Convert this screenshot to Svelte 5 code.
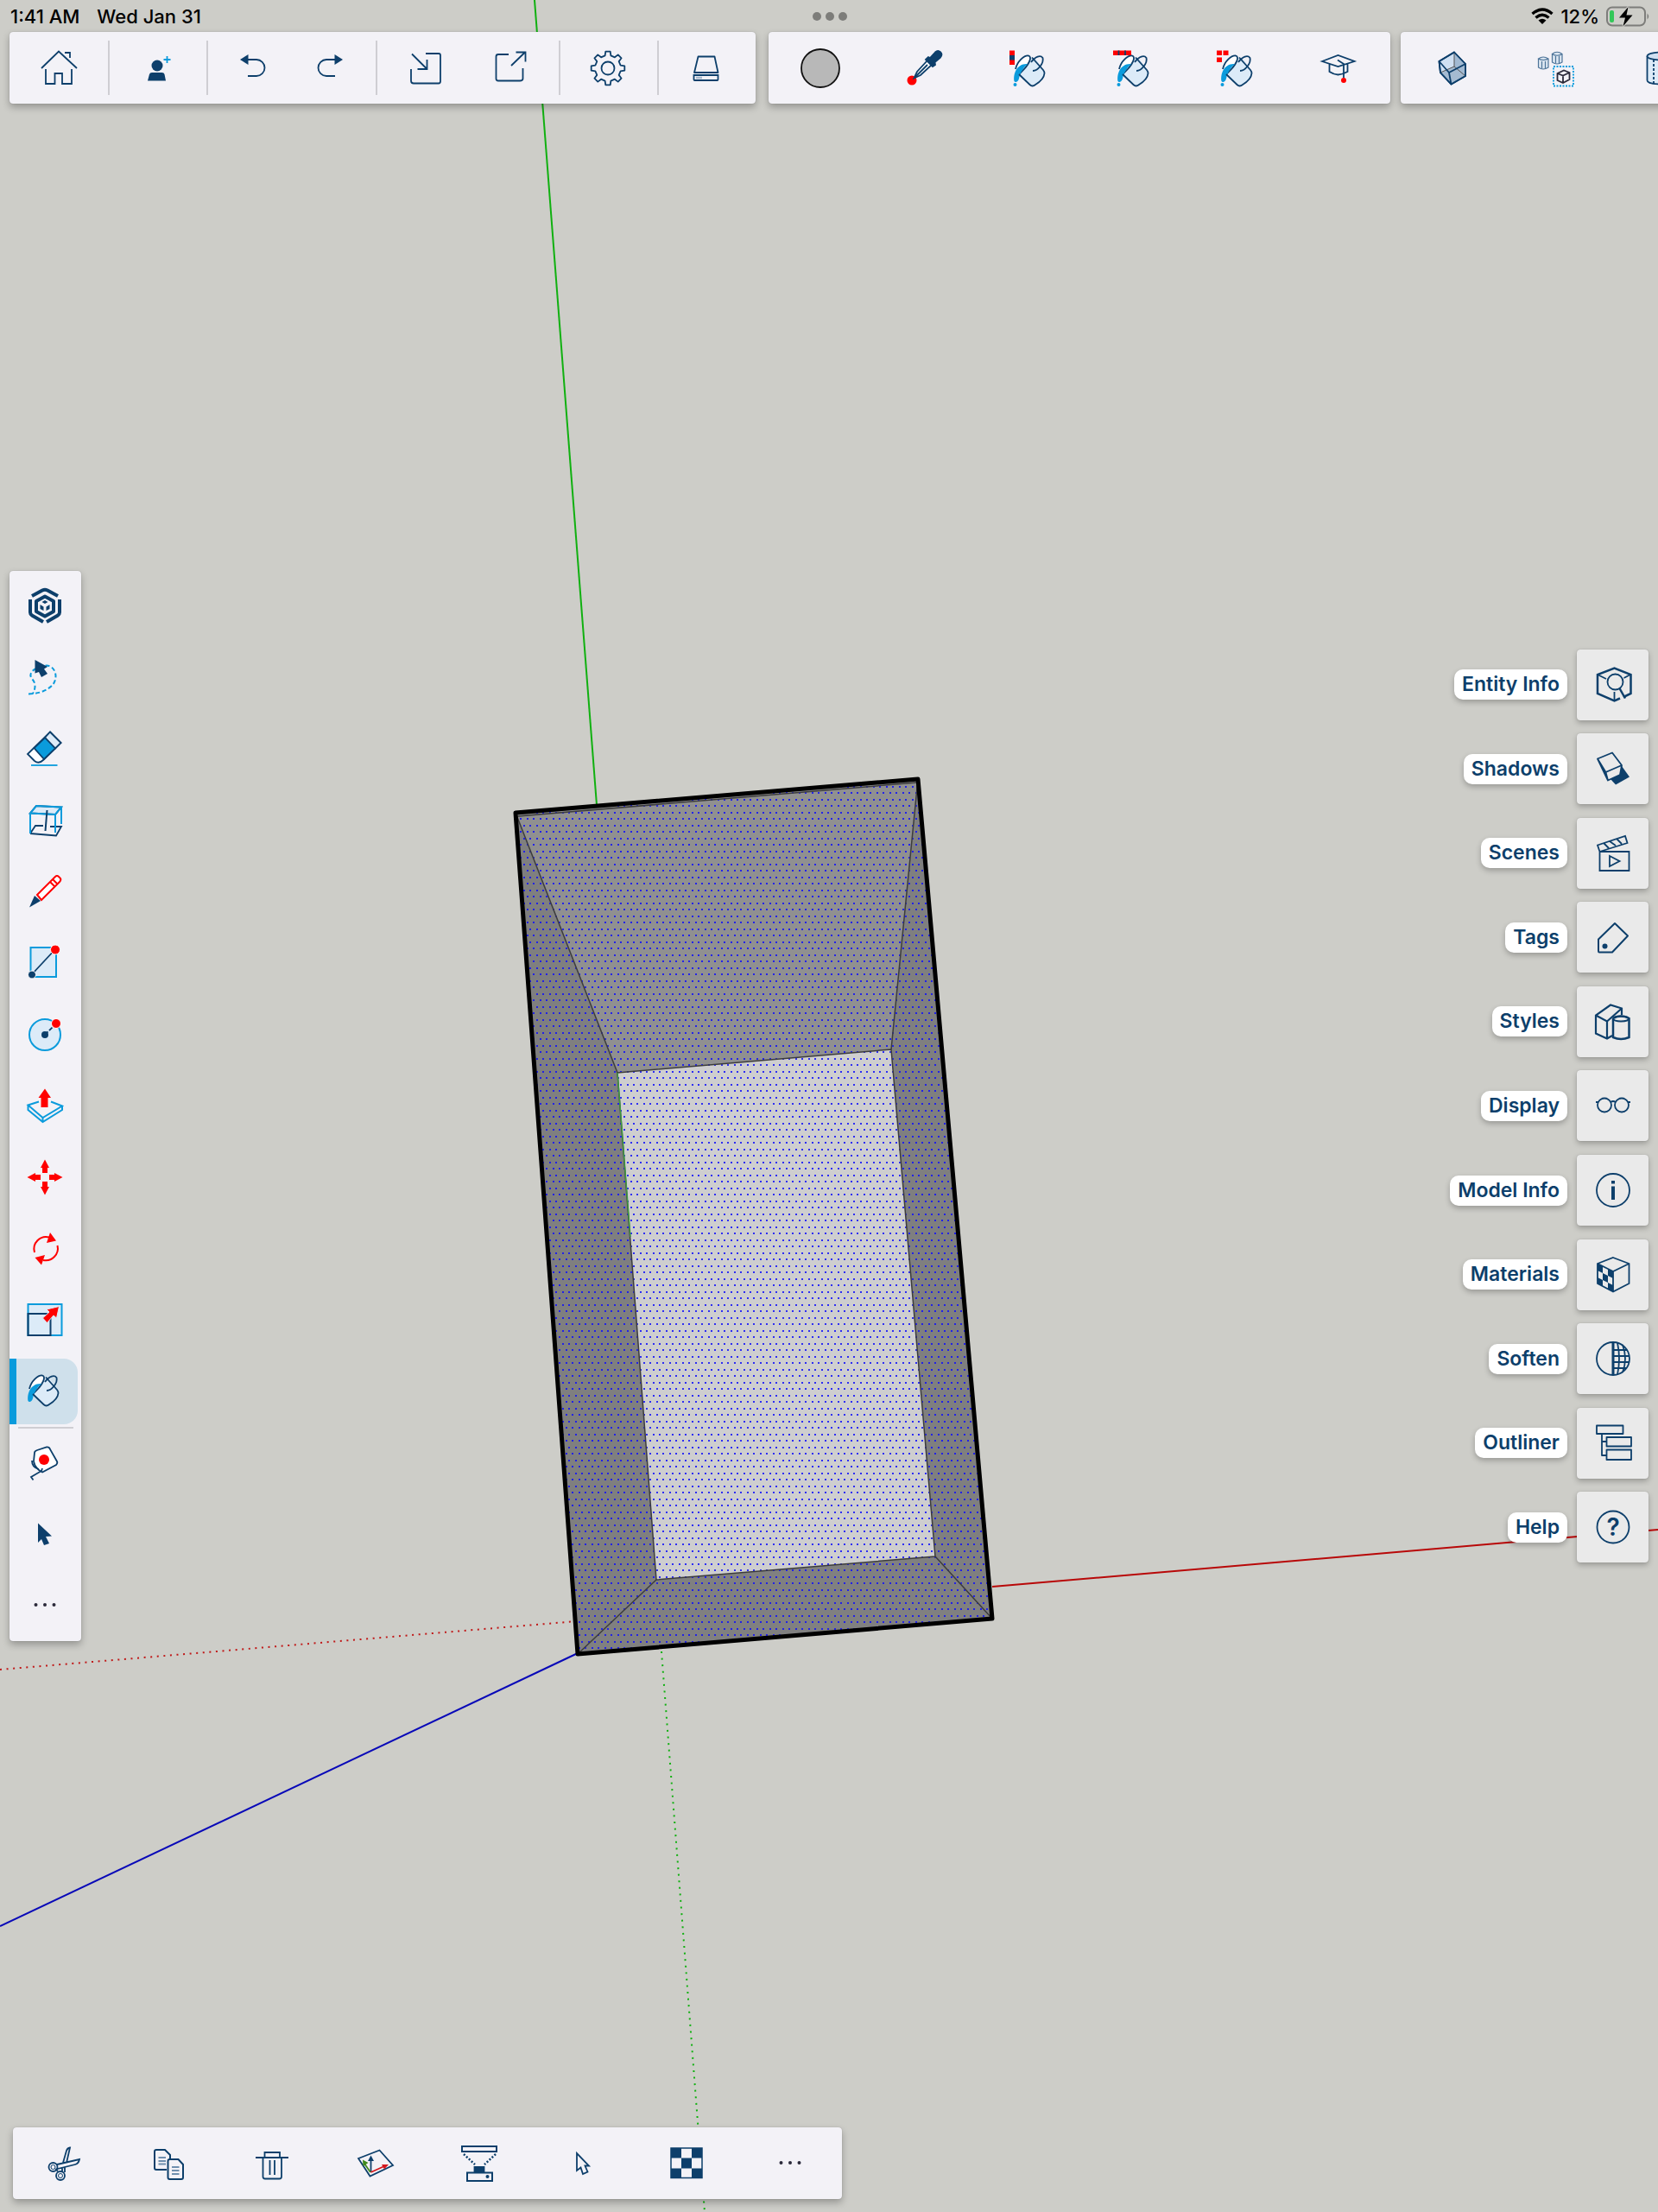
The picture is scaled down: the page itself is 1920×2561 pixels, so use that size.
<script>
	const navy = '#0d3f6b';
	const cyan = '#0a9bdc';
	const pale = '#dcebf8';

	const gearPath = () => {
		const points = [];
		for (let i = 0; i < 8; i++) {
			const steps = [
				[-13, 15],
				[-8, 19.5],
				[8, 19.5],
				[13, 15]
			];
			for (const [offset, radius] of steps) {
				const angle = ((i * 45 + offset) * Math.PI) / 180;
				points.push(
					`${(24 + radius * Math.sin(angle)).toFixed(1)} ${(24 - radius * Math.cos(angle)).toFixed(1)}`
				);
			}
		}
		return `M${points.join('L')}Z`;
	};

	const bucket = `
		<path d="M14 31L27 43Q29.500 46 33 43Q44 36 43.500 28L33 12L24 13Z" fill="${pale}" stroke="none"/>
		<path d="M10 25C12 16 20 9 25 9.500C29 10.500 27 17 20 25L14 31" fill="#fff"/>
		<path d="M8.500 39C7 30 12 18 24 19C20 23 16 27 14 36C13 40 9.500 41 8.500 39Z" fill="${cyan}" stroke="none"/>
		<path d="M14 31L26.500 43Q29.500 46 33 43C38 40 43 35 43.500 30Q43.600 28 42 26L29 11.500"/>
		<path d="M28 17C33 10 39 8.500 41.500 12C43 18 36 27 30 27"/>`;
	const drop = `<circle cx="9.500" cy="43" r="2" fill="${cyan}" stroke="none"/>`;
	const dots = `<g fill="#2b2a3a" stroke="none"><circle cx="13.500" cy="23" r="2"/><circle cx="24" cy="23" r="2"/><circle cx="34.500" cy="23" r="2"/></g>`;

	const icons = {
		home: `<path d="M4 24L24 4.500L45 24M9 25V42H19.500V30H28V42H39V25M31 6H37V12"/>`,
		person: `<g fill="${navy}" stroke="none"><circle cx="24" cy="21" r="6.500"/><path d="M13 38.500L15 31Q15.500 29 18 29H29.500Q32 29 32.500 31L34 38.500Z"/></g><path d="M35.500 10V18M31.500 14H39.500" stroke="${cyan}"/>`,
		undo: `<path d="M18 14H29A9.500 9.500 0 0 1 29 33H19"/><path d="M10 14L19.500 8V20Z" fill="${navy}" stroke="none"/>`,
		redo: `<path d="M30 14H19A9.500 9.500 0 0 0 19 33H29"/><path d="M38 14L28.500 8V20Z" fill="${navy}" stroke="none"/>`,
		import: `<path d="M25 7H40Q42 7 42 9V39Q42 41.500 40 41.500H11Q8 41.500 8 38.500V25M9 7.500L26.500 25M15.500 25H26.500V14"/>`,
		export: `<path d="M22 8H10Q7.500 8 7.500 10.500V36Q7.500 38.500 10 38.500H35Q38.500 38.500 38.500 36V24M25 21L41 5.500M30.500 5.500H41.500V16.500"/>`,
		gear: `<path d="${gearPath()}" stroke-linejoin="round"/><circle cx="24" cy="24" r="7.500"/>`,
		drive: `<path d="M14.500 10.500H33.500L37.500 29H10Z" stroke-linejoin="round"/><path d="M9.500 32H37.500V37Q37.500 38 36.500 38H10.500Q9.500 38 9.500 37Z"/><path d="M12 35H19" stroke="#a9b9cc" stroke-width="2.500"/>`,
		swatch: `<circle cx="24" cy="24" r="22" fill="#b8b8b8" stroke="#111"/>`,
		dropper: `<circle cx="10" cy="38" r="5.500" fill="red" stroke="none"/><path d="M12.500 35.500L16 28L28 15L33 20L20 32Z" fill="#fff"/><path d="M14 34L28 20"/><path d="M26 14L29 11L31 12L37 5.500C41 1.500 47 6.500 43 11.500L36.500 17L37 20L34 22Z" fill="${navy}"/>`,
		paintOne: `${bucket}${drop}<g stroke="none"><path d="M3 3.500H9V20H3Z" fill="red"/><path d="M3 9H9V14.500H3Z" fill="${navy}"/></g>`,
		paintRow: `${bucket}${drop}<path d="M3 3.500H24V9H3Z" fill="red" stroke="none"/><path d="M9.500 3.500V9M17 3.500V9"/>`,
		paintAll: `${bucket}${drop}<path d="M3 3.500H9V9H3ZM10.500 3.500H16.500V9H10.500ZM3 11.500H9V17H3Z" fill="red" stroke="none"/>`,
		learn: `<path d="M5 16L23.500 9L42.500 16L23.500 22ZM13.500 19V28Q18 31 23.500 31.500Q29 31 34.500 28V19M23 14.500L30 19V35"/><circle cx="30" cy="38" r="3" fill="red" stroke="none"/>`,
		box: `<path d="M26 5.500L39 19V33L22.500 42.500L10 29L8.500 16Z" fill="#cfe0f2"/><path d="M26 5.500L39 19V33L26 22Z" fill="#8fa9c4" stroke="none" opacity=".7"/><path d="M10 29L26 22L39 33L22.500 42.500Z" fill="#7b95b0" stroke="none" opacity=".5"/><path d="M26 5.500V22L10 29M26 22L39 33" stroke="#555" stroke-width="1"/><path d="M26 5.500L39 19V33L22.500 42.500L10 29L8.500 16ZM8.500 16L20 29L39 19M20 29L22.500 42.500" stroke-linejoin="round"/>`,
		components: `<g stroke="#4c7398" stroke-width="1.200" fill="#dbe6f1"><path d="M3.500 13V23Q9 27 15 23V13Q9 9 3.500 13Q9 16 15 13M7.500 16V24M11.500 16V24"/><path d="M19.500 7.500V17Q25 21 31 17V7.500Q25 3 19.500 7.500Q25 11 31 7.500M23.500 10V18M27.500 10V18"/></g><path d="M21 22H44V44.500H21Z" stroke="${cyan}" stroke-dasharray="2 1.500"/><path d="M25.500 30L33 26.500L39.500 29V37L32 41L25.500 38ZM25.500 30L32 32.500L39.500 29M32 32.500V41" stroke="#2b2a3a"/>`,
		cylinder: `<path d="M9.500 10V38C9.500 44 40 44 40 38V10" fill="${pale}"/><ellipse cx="24.500" cy="10" rx="15" ry="4.500" fill="#cfe0f2"/><path d="M17 14V42" stroke-dasharray="3 2"/>`,
		logo: `<g stroke-width="4" stroke-linejoin="round"><path d="M9 12L21 5.500Q24 4 27 5.500L39 12"/><path d="M7 16V31Q7 33 9 34.500L22 42M41 16V31Q41 33 39 34.500L26 42"/><path d="M24 12.500L34 18V30L24 35.500L14 30V18Z"/></g><g fill="${navy}" stroke="none"><path d="M24 17L27.500 19L24 21L20.500 19ZM18.500 22L22.500 24.500V29L18.500 27ZM29.500 22L25.500 24.500V29L29.500 27Z"/></g>`,
		lasso: `<path d="M5 43.500C20 43 28 38 33 33C40 24 36 11 26 10.500L22 11M14 14C7 17 6 22 9 26C13 30 14 36 10 43" stroke="${cyan}" stroke-width="2" stroke-dasharray="5 3"/><path d="M12.500 4L27 12L23 14.500L27 20L20 24L17 18L12.500 19.500Z" fill="${navy}" stroke="none"/>`,
		eraser: `<path d="M30 4.500L42.500 17L22 37Q17 42 12 38L4 30Z" fill="#fff"/><path d="M30 4.500L42.500 17L36 23.500L24 11Z" fill="${pale}"/><path d="M24 11L36 23.500L23 36L11.500 23Z" fill="${cyan}"/><path d="M8 43H38.500" stroke="${cyan}"/>`,
		section: `<path d="M7 39L13 30H22M30 31L43 31L37 41.500L7 39"/><path d="M14 7L43 8.500L36 17L7 15.500Z" fill="${pale}"/><g stroke="${cyan}" stroke-width="2"><path d="M14 7L43 8.500L36 17L7 15.500ZM7 15V39M36 17V38M43 8V28"/></g><path d="M26.500 12L24.500 36" stroke-width="2"/>`,
		pencil: `<path d="M6 42.500L12 29L19 35Z" fill="${navy}" stroke="none"/><path d="M15 28L36 7Q38 5 40 7L42 9Q43 11 41 13L20 34ZM33 10L38.500 15.500M30 13L35 18" stroke="red" stroke-width="2" fill="#fff"/>`,
		rectangle: `<path d="M7.500 6H37V40H7.500Z" stroke="${cyan}" stroke-width="2" fill="${pale}"/><path d="M9 37L36 8"/><circle cx="36" cy="8.500" r="5.500" fill="red" stroke="#fff" stroke-width="1"/><circle cx="9" cy="37.500" r="4.500" fill="${navy}" stroke="#fff" stroke-width="1"/>`,
		circle: `<circle cx="24" cy="24" r="18" stroke="${cyan}" stroke-width="2" fill="${pale}"/><path d="M24 24L36 12" stroke-dasharray="5 2"/><circle cx="37" cy="11" r="5.500" fill="red" stroke="#fff" stroke-width="1"/><circle cx="24" cy="24" r="4" fill="${navy}" stroke="none"/>`,
		pushPull: `<path d="M17 19.500L4.500 23.500L21.500 38L44 24.500L31 19.500M4.500 23.500V29L21.500 43L44 29V24.500M21.500 38V43" stroke="${cyan}" stroke-width="2"/><path d="M24 4.500L31 15H27.500V26H19.500V15H16.500Z" fill="red" stroke="none"/>`,
		move: `<g fill="red" stroke="none"><path d="M24 3.500L29 13H27V19H21V13H19Z"/><path d="M24 44.500L29 35H27V29H21V35H19Z"/><path d="M3.500 24L13 19V21H19V27H13V29Z"/><path d="M44.500 24L35 19V21H29V27H35V29Z"/></g>`,
		rotate: `<path d="M12 28A14 14 0 0 1 29 10.500M38.500 20A14 14 0 0 1 22 37" stroke="red" stroke-width="2"/><path d="M30 5L37 14.500L26 17ZM20 42.500L12.500 34L24 31Z" fill="red" stroke="none"/>`,
		scale: `<path d="M4.500 6H43.500V42H4.500Z" fill="${pale}" stroke="${cyan}" stroke-width="2"/><path d="M4.500 17H30.500V42H4.500Z" stroke-width="2"/><path d="M40.500 8.500L37.500 22L34 19L26.500 27.500L21.500 22L29 15L26 12Z" fill="red" stroke="${pale}" stroke-width="1"/>`,
		paint: `<g transform="translate(-4 -4)">${bucket}</g>`,
		tape: `<path d="M12 12Q12 10 15 9L26 5.500Q29 5 30 8L38 22Q39 24 37 26L21 34.500C17 33 12 28 11 22Z" fill="#fff"/><path d="M21 30L20 33L8 40L10.500 43.500M9 21C9 27 13 30 17 31" /><circle cx="23" cy="20" r="6" fill="red" stroke="none"/>`,
		select: `<path d="M16 11.500L32 26.500L25 27L29 35L23 37L20 30L16 34Z" fill="${navy}" stroke="none"/>`,
		more: dots,
		entity: `<path d="M36 38L44.500 34V12L25.500 4.500L6 12V34L25.500 42.500L32 39.500" stroke-width="2.500"/><circle cx="26.500" cy="20.500" r="9"/><path d="M6 12L16 17M44 12L36.500 16M25.500 32V42"/><path d="M31.500 28L38 39.500" stroke-width="2.500"/>`,
		shadows: `<path d="M21 36L34 21L43 33.500L27 42.500Z" fill="${navy}" stroke="none"/><path d="M6 12.500L23 5.500L34 20L32 31L18 37.500L6 12.500L15.500 28L18 37.500M15.500 28L34 20" fill="#eaeaea" stroke-linejoin="round"/>`,
		scenes: `<path d="M8.500 22H42.500V44H8.500ZM20 27L31.500 33L20 39ZM6 14.500L38 4L40.500 12L8.500 22ZM13 12L19 18M20 10L27 15M28 7L34 13"/>`,
		tags: `<path d="M26 8L41 22.500L23 41.500H8Q7 41.500 7 40V26.500Z" stroke-width="2" stroke-linejoin="round"/><circle cx="14.500" cy="34.500" r="3" fill="${navy}" stroke="none"/>`,
		styles: `<path d="M23 40L17 43.500L4 37.500V16.500L21 4.500L34 8.500V16M4 16.500L17 23.500L34 8.500M17 23.500V43" stroke-width="2.200"/><path d="M24 20V42Q33 46 42.500 42V20Q33 15 24 20" fill="#eaeaea" stroke-width="2.500"/><ellipse cx="33" cy="20.500" rx="9" ry="3"/>`,
		display: `<circle cx="14" cy="23.500" r="8"/><circle cx="34" cy="23.500" r="8"/><path d="M4 20H7M41 20H44M21 20Q24 18 27 20"/>`,
		info: `<circle cx="24" cy="24" r="19"/><path d="M24 19.500V35" stroke-width="4"/><path d="M24 13V16.500" stroke-width="4"/>`,
		materials: `<path d="M24 4L42.500 11V34L24 43.500L6 34V11ZM6 11L24 20L42.500 11M24 20V43.500"/><path d="M6 11L12 14V22L6 19ZM18 17L24 20V28L18 25ZM12 22L18 25V33L12 30ZM6 27L12 30V37L6 34ZM18 33L24 36V43.500L18 40.500Z" fill="${navy}" stroke="none"/>`,
		soften: `<circle cx="24" cy="24" r="19"/><path d="M24 5V43" stroke-width="3"/><path d="M25 14H40M25 21H43M25 28H43M25 35H39M29 5.500Q33 24 29 42.500M35 8Q41 24 35 40"/>`,
		outliner: `<path d="M5 3.500H35.500V13H5ZM16.500 17H45V27.500H16.500ZM16.500 31.500H45V43H16.500ZM11 13V38H16M11 22H16" stroke-linejoin="round"/>`,
		help: `<circle cx="24" cy="24" r="18.500"/><text x="24" y="34" text-anchor="middle" font-family="Inter, sans-serif" font-size="28" font-weight="600" fill="${navy}" stroke="none">?</text>`,
		cut: `<circle cx="10.500" cy="28" r="5"/><circle cx="10.500" cy="28" r="2.500" stroke-width="1"/><circle cx="19" cy="38" r="5"/><circle cx="19" cy="38" r="2.500" stroke-width="1"/><path d="M15 25L41 19Q40 24 36 25L14 30.500L16 33M22 23L26 9Q27 6 30 5.500L26 23M21 33V29M24 34V28"/>`,
		copy: `<path d="M22 31H10Q8 31 8 29V10Q8 8 10 8H20L26 14V19" stroke-width="2"/><path d="M23.500 21Q23.500 19 25.500 19H35.500L41 25V40Q41 42 39 42H25.500Q23.500 42 23.500 40Z" stroke-width="2"/><path d="M12.500 17H21M12.500 21H21M12.500 24.500H21M28 28H36.500M28 32H36.500M28 36H36.500" stroke="#6f8fae"/>`,
		trash: `<path d="M5 17H43M15.500 17V11H33V17M13.500 17V39Q13.500 41.500 16 41.500H32.500Q35 41.500 35 39V17M21.500 20V37M27 20V37"/>`,
		axes: `<path d="M4 18L28.500 8.500L44 26L17.500 38.500Z"/><path d="M18.500 34V19"/><path d="M18.500 14.500L22 21H15Z" fill="${navy}" stroke="none"/><path d="M18 34L11 24" stroke="#3f8a1c"/><path d="M9 19.500L15.500 23L9.500 27Z" fill="#3f8a1c" stroke="none"/><path d="M18.500 34L34 27" stroke="#d3161c"/><path d="M39 25L31 25L34 30.500Z" fill="#d3161c" stroke="none"/>`,
		projector: `<path d="M4 4H44V10H4Z" stroke-width="2"/><path d="M6 13L19 25M43 13L30 25" stroke-width="2.500" stroke-dasharray="2 2"/><path d="M18.500 28H29.500V33H18.500Z" fill="${navy}"/><path d="M10 34.500H39V44H10Z" stroke-width="2"/><circle cx="33.500" cy="39" r="2" fill="${navy}" stroke="none"/>`,
		pointer: `<path d="M17 12V32L21.500 28.500L24 36L29.500 33.500L26.500 26.500H31Z"/>`,
		checker: `<path d="M6 6H42V40.500H6Z" fill="#f3f2f7" stroke-width="1.500"/><path d="M6 6H18V17.500H6ZM30 6H42V17.500H30ZM18 17.500H30V29.500H18ZM6 29.500H18V40.500H6ZM30 29.500H42V40.500H30Z" fill="${navy}" stroke="none"/>`
	};

	const fileGroups = [
		[{ icon: 'home', label: 'Home' }],
		[{ icon: 'person', label: 'Add person' }],
		[
			{ icon: 'undo', label: 'Undo' },
			{ icon: 'redo', label: 'Redo' }
		],
		[
			{ icon: 'import', label: 'Import' },
			{ icon: 'export', label: 'Export' }
		],
		[{ icon: 'gear', label: 'Settings' }],
		[{ icon: 'drive', label: 'Save' }]
	];

	const paintTools = [
		{ icon: 'swatch', label: 'Current material' },
		{ icon: 'dropper', label: 'Sample material' },
		{ icon: 'paintOne', label: 'Paint face' },
		{ icon: 'paintRow', label: 'Paint connected' },
		{ icon: 'paintAll', label: 'Paint all matching' },
		{ icon: 'learn', label: 'Learn' }
	];

	const viewTools = [
		{ icon: 'box', label: 'X-ray' },
		{ icon: 'components', label: 'Hide rest of model' },
		{ icon: 'cylinder', label: 'Hidden geometry' }
	];

	const drawTools = [
		{ icon: 'logo', label: 'Menu' },
		{ icon: 'lasso', label: 'Lasso' },
		{ icon: 'eraser', label: 'Eraser' },
		{ icon: 'section', label: 'Section' },
		{ icon: 'pencil', label: 'Line' },
		{ icon: 'rectangle', label: 'Rectangle' },
		{ icon: 'circle', label: 'Circle' },
		{ icon: 'pushPull', label: 'Push/Pull' },
		{ icon: 'move', label: 'Move' },
		{ icon: 'rotate', label: 'Rotate' },
		{ icon: 'scale', label: 'Scale' },
		{ icon: 'paint', label: 'Paint' },
		{ icon: 'tape', label: 'Tape measure' },
		{ icon: 'select', label: 'Select' },
		{ icon: 'more', label: 'More tools' }
	];

	const panels = [
		{ icon: 'entity', label: 'Entity Info' },
		{ icon: 'shadows', label: 'Shadows' },
		{ icon: 'scenes', label: 'Scenes' },
		{ icon: 'tags', label: 'Tags' },
		{ icon: 'styles', label: 'Styles' },
		{ icon: 'display', label: 'Display' },
		{ icon: 'info', label: 'Model Info' },
		{ icon: 'materials', label: 'Materials' },
		{ icon: 'soften', label: 'Soften' },
		{ icon: 'outliner', label: 'Outliner' },
		{ icon: 'help', label: 'Help' }
	];

	const editTools = [
		{ icon: 'cut', label: 'Cut' },
		{ icon: 'copy', label: 'Copy' },
		{ icon: 'trash', label: 'Delete' },
		{ icon: 'axes', label: 'Axes' },
		{ icon: 'projector', label: 'Flatten' },
		{ icon: 'pointer', label: 'Select' },
		{ icon: 'checker', label: 'Texture' },
		{ icon: 'more', label: 'More actions' }
	];

	let activeTool = $state('paint');
</script>

{#snippet icon(name)}
	<svg class="icon" viewBox="0 0 48 48" aria-hidden="true">{@html icons[name]}</svg>
{/snippet}

{#snippet tool(item)}
	<button class="tool" type="button" aria-label={item.label}>{@render icon(item.icon)}</button>
{/snippet}

<div class="app">
	<svg class="scene" viewBox="0 0 1920 2561" preserveAspectRatio="xMidYMid slice" aria-hidden="true">
		<defs>
			<pattern id="dots" x="602" y="947" width="15" height="15" patternUnits="userSpaceOnUse">
				<g fill="#1010fa" opacity="0.85">
					<rect x="0" y="0" width="2" height="2" />
					<rect x="8" y="0" width="2" height="2" />
					<rect x="4" y="8" width="2" height="2" />
					<rect x="11" y="8" width="2" height="2" />
				</g>
			</pattern>
		</defs>
		<g fill="none" stroke-width="2">
			<path d="M619 0L691 932" stroke="#10b010" />
			<path d="M1149 1837L1920 1771" stroke="#b80808" />
			<path d="M669 1914L0 2230" stroke="#0808b8" />
			<path d="M0 1933L668 1877" stroke="#c01818" stroke-dasharray="2 5.6" />
			<path d="M766 1912L816 2561" stroke="#10b010" stroke-dasharray="2 5.6" />
		</g>
		<path d="M597 941L1063 902L1032 1215L715 1242Z" fill="#909090" />
		<path d="M597 941L715 1242L760 1829L669 1915Z" fill="#7f7f7f" />
		<path d="M1063 902L1149 1874L1083 1802L1032 1215Z" fill="#7f7f7f" />
		<path d="M669 1915L760 1829L1083 1802L1149 1874Z" fill="#808080" />
		<path d="M715 1242L1032 1215L1083 1802L760 1829Z" fill="#cececf" />
		<path d="M597 941L1063 902L1149 1874L669 1915Z" fill="url(#dots)" />
		<g fill="none" stroke="#3c3c3c" stroke-width="1.5">
			<path d="M715 1242L1032 1215L1083 1802L760 1829Z" />
			<path d="M597 941L715 1242M1063 902L1032 1215M1083 1802L1149 1874M760 1829L669 1915" />
			<path d="M600 945L1061 906" />
		</g>
		<path d="M715 1242L730 1432" stroke="#3f9a3f" stroke-width="1.5" />
		<path
			d="M597 941L1063 902L1149 1874L669 1915Z"
			fill="none"
			stroke="#000"
			stroke-width="5"
			stroke-linejoin="round"
		/>
	</svg>

	<header class="status">
		<div class="when">
			<span>1:41 AM</span>
			<span>Wed Jan 31</span>
		</div>
		<div class="grabber"><i></i><i></i><i></i></div>
		<div class="power">
			<svg class="wifi" viewBox="0 0 26 19" aria-hidden="true">
				<g fill="none" stroke="#000" stroke-width="3.4">
					<path d="M1.500 7Q13 -3 24.500 7" />
					<path d="M5.500 11.500Q13 5 20.500 11.500" />
				</g>
				<path d="M13 19L8.500 14.500Q13 11 17.500 14.500Z" />
			</svg>
			<span>12%</span>
			<svg class="battery" viewBox="0 0 50 24" aria-hidden="true">
				<rect x="1" y="1.500" width="44" height="21" rx="6" fill="none" stroke="#7d7d7a" stroke-width="2" />
				<path d="M47.500 8.500Q51 12 47.500 15.500Z" fill="#7d7d7a" />
				<rect x="4" y="5" width="5" height="14" rx="2" fill="#33c759" />
				<path d="M25.500 1L15 13.500H22L19.500 23.500L30.500 10.500H23.500Z" stroke="#cdcdc8" stroke-width="2" paint-order="stroke" />
			</svg>
		</div>
	</header>

	<div class="top">
		<nav class="bar file" aria-label="File">
			{#each fileGroups as group, index}
				<div class="group" class:pair={group.length > 1} class:wide={index === 3}>
					{#each group as item}
						{@render tool(item)}
					{/each}
				</div>
			{/each}
		</nav>
		<nav class="bar paint" aria-label="Paint">
			{#each paintTools as item}
				{@render tool(item)}
			{/each}
		</nav>
		<nav class="bar" aria-label="View">
			{#each viewTools as item}
				{@render tool(item)}
			{/each}
		</nav>
	</div>

	<main class="middle">
		<nav class="bar side" aria-label="Tools">
			{#each drawTools as item}
				<button
					class="side-tool"
					class:active={activeTool === item.icon}
					class:divided={item.icon === 'tape'}
					type="button"
					aria-label={item.label}
					onclick={() => (activeTool = item.icon)}
				>
					{@render icon(item.icon)}
				</button>
			{/each}
		</nav>
		<nav class="panels" aria-label="Panels">
			{#each panels as item}
				<button class="panel" type="button">
					<span class="label">{item.label}</span>
					<span class="tile">{@render icon(item.icon)}</span>
				</button>
			{/each}
		</nav>
	</main>

	<footer class="bottom">
		<nav class="bar" aria-label="Edit">
			{#each editTools as item}
				{@render tool(item)}
			{/each}
		</nav>
	</footer>
</div>

<style>
	:global(body) {
		background: #cdcdc8;
	}

	.app {
		position: relative;
		display: flex;
		flex-direction: column;
		min-height: 100vh;
		overflow: hidden;
		font-family: Inter, 'Liberation Sans', sans-serif;
	}

	.scene {
		position: absolute;
		inset: 0;
		width: 100%;
		height: 100%;
	}

	.status,
	.top,
	.middle,
	.bottom {
		position: relative;
	}

	button {
		display: flex;
		align-items: center;
		justify-content: center;
		padding: 0;
		border: 0;
		background: none;
		font: inherit;
		cursor: pointer;
	}

	.icon {
		width: 48px;
		height: 48px;
		fill: none;
		stroke: #0d3f6b;
		stroke-width: 1.8;
	}

	/* status line */
	.status {
		display: grid;
		grid-template-columns: 1fr auto 1fr;
		align-items: center;
		height: 37px;
		padding: 0 10px 0 12px;
		font-size: 22px;
		font-weight: 500;
	}

	.when {
		display: flex;
		gap: 20px;
	}

	.grabber {
		display: flex;
		gap: 5px;
	}

	.grabber i {
		width: 10px;
		height: 10px;
		border-radius: 50%;
		background: #7d7d7a;
	}

	.power {
		display: flex;
		align-items: center;
		justify-content: flex-end;
		gap: 8px;
	}

	.wifi {
		width: 26px;
		height: 19px;
	}

	.battery {
		width: 50px;
		height: 24px;
	}

	/* toolbars */
	.bar {
		display: flex;
		flex: none;
		border-radius: 4px;
		background: #f3f2f7;
		box-shadow:
			0 0 1px rgba(0, 0, 0, 0.3),
			0 4px 8px rgba(0, 0, 0, 0.28);
	}

	.top {
		display: flex;
		padding-left: 11px;
	}

	.tool {
		width: 120px;
		height: 83px;
	}

	.file {
		margin-right: 15px;
	}

	.paint {
		margin-right: 12px;
	}

	.group {
		position: relative;
		display: flex;
	}

	.group + .group::before {
		content: '';
		position: absolute;
		left: 0;
		top: 10px;
		bottom: 10px;
		width: 2px;
		background: #cfced3;
	}

	.group .tool {
		width: 114px;
	}

	.pair {
		padding: 0 7px;
	}

	.pair .tool {
		width: 91px;
	}

	.wide .tool {
		width: 99px;
	}

	.middle {
		display: flex;
		flex: 1;
		align-items: center;
		justify-content: space-between;
		padding: 0 11px 22px;
	}

	.side {
		flex-direction: column;
		justify-content: space-between;
		width: 83px;
		min-height: 48.4vh;
		padding: 3px 0;
		box-sizing: border-box;
	}

	.side-tool {
		position: relative;
		width: 79px;
		height: 76px;
		padding-left: 3px;
	}

	.active {
		border-radius: 0 16px 16px 0;
		background: #cfe0eb;
		box-shadow: inset 8px 0 #0a9bdc;
	}

	.divided::before {
		content: '';
		position: absolute;
		left: 10px;
		top: -4px;
		width: 64px;
		height: 2px;
		background: #cfced3;
	}

	.panels {
		display: flex;
		flex-direction: column;
		justify-content: space-between;
		min-height: 41.3vh;
	}

	.panel {
		justify-content: flex-end;
		gap: 11px;
	}

	.label {
		padding: 0 9px;
		border-radius: 10px;
		background: #fff;
		box-shadow: 0 3px 6px rgba(0, 0, 0, 0.25);
		color: #0d3f6b;
		font-size: 23px;
		font-weight: 600;
		line-height: 35px;
	}

	.tile {
		display: flex;
		align-items: center;
		justify-content: center;
		width: 83px;
		height: 82px;
		border-radius: 4px;
		background: #eaeaea;
		box-shadow:
			0 0 1px rgba(0, 0, 0, 0.3),
			0 3px 6px rgba(0, 0, 0, 0.25);
	}

	.bottom {
		display: flex;
		padding: 0 15px 15px;
	}
</style>
